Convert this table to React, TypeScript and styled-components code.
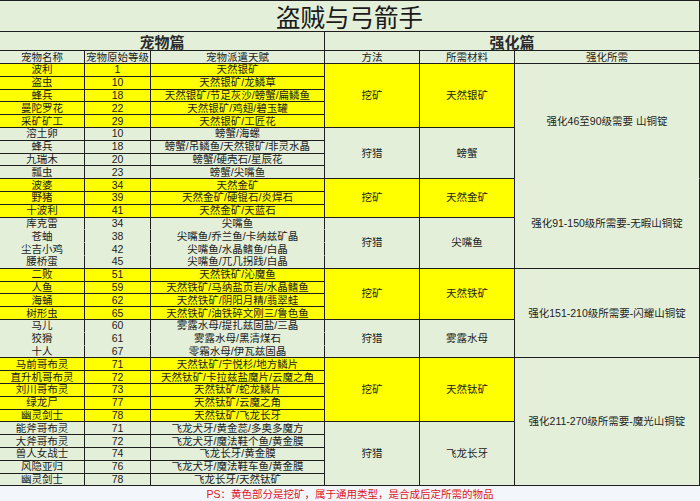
import React from 'react';
import styled, { createGlobalStyle, css } from 'styled-components';

const GREEN = '#e3efd9';
const YELLOW = '#ffff00';
const LINE = '#1e1e1e';

const GlobalStyle = createGlobalStyle`
  html, body { margin: 0; padding: 0; background: #f3f7fb; }
  body { font-family: "Liberation Sans", "Noto Sans CJK SC", sans-serif; }
`;

const Sheet = styled.div`
  width: 700px;
  height: 501px;
  display: grid;
  grid-template-columns: 85px 66px 174px 95px 95px 185px;
  grid-template-rows: 32px 19px 13px repeat(33, 12.8px) 1fr;
  background: ${GREEN};
  color: #1c1c1c;
  overflow: hidden;
`;

const cellBase = css`
  box-sizing: border-box;
  display: flex;
  align-items: center;
  justify-content: center;
  white-space: nowrap;
  border-right: 1px solid ${LINE};
  border-bottom: 1px solid ${LINE};
`;

const smallText = css`
  font-size: 10.5px;
  line-height: 11px;
`;

const Title = styled.div`
  ${cellBase};
  grid-column: 1 / -1;
  grid-row: 1;
  border-top: 1px solid ${LINE};
  font-family: "Noto Sans CJK SC", sans-serif;
  font-size: 24.5px;
  line-height: 26px;
  padding-top: 1px;
  color: #1a1a1a;
`;

const SectionHead = styled.div<{ $col: string }>`
  ${cellBase};
  grid-column: ${(p) => p.$col};
  grid-row: 2;
  font-family: "Noto Sans CJK SC", sans-serif;
  font-size: 15px;
  line-height: 17px;
  font-weight: 700;
  color: #2a2a2a;
`;

const ColHead = styled.div`
  ${cellBase};
  ${smallText};
  grid-row: 3;
`;

const DataCell = styled.div<{ $row: number; $col: number; $yellow: boolean; $lined: boolean }>`
  ${cellBase};
  ${smallText};
  grid-row: ${(p) => p.$row};
  grid-column: ${(p) => p.$col};
  background: ${(p) => (p.$yellow ? YELLOW : GREEN)};
  border-bottom-color: ${(p) => (p.$lined ? LINE : 'transparent')};
`;

const GroupCell = styled.div<{ $row: number; $col: number; $span: number; $yellow: boolean }>`
  ${cellBase};
  ${smallText};
  grid-column: ${(p) => p.$col};
  grid-row: ${(p) => p.$row} / span ${(p) => p.$span};
  background: ${(p) => (p.$yellow ? YELLOW : GREEN)};
`;

const NeedCell = styled.div<{ $row: number; $span: number; $open?: boolean }>`
  ${cellBase};
  ${smallText};
  grid-column: 6;
  grid-row: ${(p) => p.$row} / span ${(p) => p.$span};
  border-bottom-color: ${(p) => (p.$open ? 'transparent' : LINE)};
`;

const Footer = styled.div`
  grid-column: 1 / -1;
  display: flex;
  align-items: center;
  justify-content: center;
  background: #f3f7fb;
  color: #e0141e;
  font-size: 10.5px;
  line-height: 12px;
`;

type Group = {
  yellow: boolean;
  method: string;
  material: string;
  lined: boolean;
  rows: [string, string, string][];
};

const groups: Group[] = [
  {
    yellow: true, method: '挖矿', material: '天然银矿', lined: true,
    rows: [
      ['波利', '1', '天然银矿'],
      ['盗虫', '10', '天然银矿/龙鳞草'],
      ['蜂兵', '18', '天然银矿/节足灰沙/螃蟹/扁鳞鱼'],
      ['曼陀罗花', '22', '天然银矿/鸡翅/碧玉罐'],
      ['采矿矿工', '29', '天然银矿/工匠花'],
    ],
  },
  {
    yellow: false, method: '狩猎', material: '螃蟹', lined: true,
    rows: [
      ['溶土卵', '10', '螃蟹/海螺'],
      ['蜂兵', '18', '螃蟹/吊鳞鱼/天然银矿/非灵水晶'],
      ['九瑞木', '20', '螃蟹/硬壳石/星辰花'],
      ['瓢虫', '23', '螃蟹/尖嘴鱼'],
    ],
  },
  {
    yellow: true, method: '挖矿', material: '天然金矿', lined: true,
    rows: [
      ['波婆', '34', '天然金矿'],
      ['野猪', '39', '天然金矿/硬锟石/炎焊石'],
      ['十波利', '41', '天然金矿/天蓝石'],
    ],
  },
  {
    yellow: false, method: '狩猎', material: '尖嘴鱼', lined: false,
    rows: [
      ['库克雷', '34', '尖嘴鱼'],
      ['苍蚰', '38', '尖嘴鱼/乔兰鱼/卡纳兹矿晶'],
      ['尘吉小鸡', '42', '尖嘴鱼/水晶鳍鱼/白晶'],
      ['腰桥蛋', '45', '尖嘴鱼/兀几拐践/白晶'],
    ],
  },
  {
    yellow: true, method: '挖矿', material: '天然铁矿', lined: true,
    rows: [
      ['二败', '51', '天然铁矿/沁魔鱼'],
      ['人鱼', '59', '天然铁矿/马纳盐页岩/水晶鳍鱼'],
      ['海蛹', '62', '天然铁矿/阴阳月精/翡翠蛙'],
      ['树形虫', '65', '天然铁矿/油铁碎文刚三/鲁色鱼'],
    ],
  },
  {
    yellow: false, method: '狩猎', material: '雾露水母', lined: false,
    rows: [
      ['马儿', '60', '雾露水母/提扎兹固盐/三晶'],
      ['狡猾', '61', '雾露水母/黑清煤石'],
      ['十人', '67', '零霜水母/伊瓦兹固晶'],
    ],
  },
  {
    yellow: true, method: '挖矿', material: '天然钛矿', lined: true,
    rows: [
      ['马前哥布灵', '71', '天然钛矿/宁悦杉/地方鳞片'],
      ['直升机哥布灵', '72', '天然钛矿/卡拉兹盐魔片/云魔之角'],
      ['刘川哥布灵', '73', '天然钛矿/蛇龙鳞片'],
      ['绿龙尸', '77', '天然钛矿/云魔之角'],
      ['幽灵剑士', '78', '天然钛矿/飞龙长牙'],
    ],
  },
  {
    yellow: false, method: '狩猎', material: '飞龙长牙', lined: true,
    rows: [
      ['能斧哥布灵', '71', '飞龙犬牙/黄金蕊/多奥多魔方'],
      ['大斧哥布灵', '72', '飞龙犬牙/魔法鞋个鱼/黄金膜'],
      ['兽人女战士', '74', '飞龙长牙/黄金膜'],
      ['风隐亚归', '76', '飞龙犬牙/魔法鞋车鱼/黄金膜'],
      ['幽灵剑士', '78', '飞龙长牙/天然钛矿'],
    ],
  },
];

const needs = [
  { start: 1, span: 9, text: '强化46至90级需要 山铜锭', open: true },
  { start: 10, span: 7, text: '强化91-150级所需要-无暇山铜锭' },
  { start: 17, span: 7, text: '强化151-210级所需要-闪耀山铜锭' },
  { start: 24, span: 10, text: '强化211-270级所需要-魔光山铜锭' },
];

const FIRST = 4;

export default function App() {
  let idx = 0;
  const left: React.ReactNode[] = [];
  const right: React.ReactNode[] = [];
  groups.forEach((g, gi) => {
    const startRow = FIRST + idx;
    g.rows.forEach((r, ri) => {
      const row = FIRST + idx;
      const lined = g.lined || ri === g.rows.length - 1;
      r.forEach((t, ci) => {
        left.push(
          <DataCell key={`${row}-${ci}`} $row={row} $col={ci + 1} $yellow={g.yellow} $lined={lined}>
            {t}
          </DataCell>
        );
      });
      idx += 1;
    });
    right.push(
      <GroupCell key={`m${gi}`} $row={startRow} $col={4} $span={g.rows.length} $yellow={g.yellow}>
        {g.method}
      </GroupCell>,
      <GroupCell key={`t${gi}`} $row={startRow} $col={5} $span={g.rows.length} $yellow={g.yellow}>
        {g.material}
      </GroupCell>
    );
  });

  return (
    <>
      <GlobalStyle />
      <Sheet>
        <Title>盗贼与弓箭手</Title>
        <SectionHead $col="1 / 4">宠物篇</SectionHead>
        <SectionHead $col="4 / 7">强化篇</SectionHead>
        {['宠物名称', '宠物原始等级', '宠物派遣天赋', '方法', '所需材料', '强化所需'].map((h) => (
          <ColHead key={h}>{h}</ColHead>
        ))}
        {left}
        {right}
        {needs.map((n) => (
          <NeedCell key={n.text} $row={FIRST + n.start - 1} $span={n.span} $open={n.open}>
            {n.text}
          </NeedCell>
        ))}
        <Footer>PS：黄色部分是挖矿，属于通用类型，是合成后定所需的物品</Footer>
      </Sheet>
    </>
  );
}
